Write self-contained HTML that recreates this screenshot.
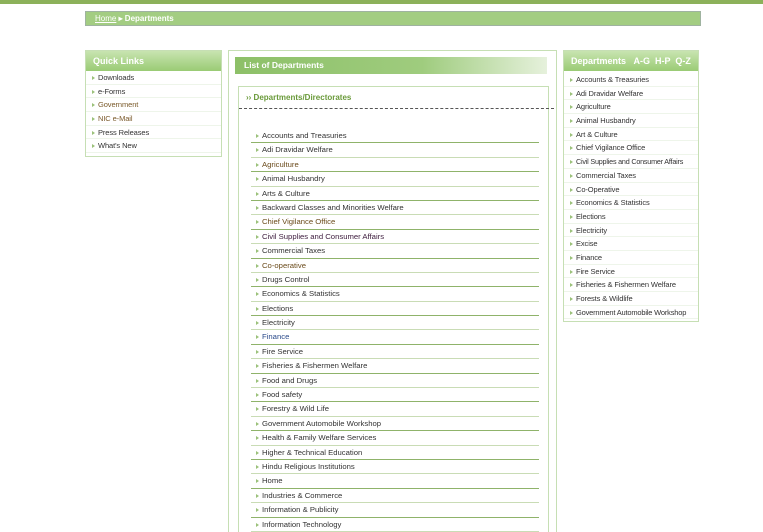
<!DOCTYPE html>
<html><head><meta charset="utf-8"><style>
*{margin:0;padding:0;box-sizing:border-box}
html,body{width:763px;height:532px;overflow:hidden}
body{background:#fff;font-family:"Liberation Sans",Arial,sans-serif;font-size:8px;color:#333;position:relative}
.top{position:absolute;left:0;top:0;width:763px;height:4px;background:#8cb15a}
.bc{position:absolute;left:85px;top:11px;width:616px;height:15px;background:#a3cd82;border:1px solid #9fb3a0;color:#fff;font-weight:bold;font-size:8px;line-height:13px;padding-left:9px}
.bc u{font-weight:normal}
.box{position:absolute;border:1px solid #c6dfb4;background:#fff}
.hd{height:20px;background:linear-gradient(#c8e4b0,#9acb74);color:#fff;font-weight:bold;font-size:9px;line-height:20px;padding-left:7px;white-space:nowrap}
ul{list-style:none}
.side li{height:13.7px;line-height:13.5px;border-bottom:1px solid #eef5ea;padding-left:12px;position:relative;font-size:7.5px;white-space:nowrap;letter-spacing:-0.1px}
.side li:before,.mid li:before{content:"";position:absolute;left:6px;top:5px;border-left:3px solid #9bc17a;border-top:2px solid transparent;border-bottom:2px solid transparent}
.mid li{height:14.4px;line-height:14px;border-bottom:1px solid #8fb36a;padding-left:11px;position:relative;font-size:7.7px}
.mid li.l{border-bottom-color:#c9dcb5}
.mid li:before{left:5px}
</style></head><body>
<div class="top"></div>
<div class="bc"><u>Home</u> ▸ Departments</div>
<div class="box" style="left:85px;top:50px;width:137px;height:107px">
<div class="hd">Quick Links</div>
<ul class="side">
<li>Downloads</li><li>e-Forms</li><li style="color:#7a5a2a">Government</li><li style="color:#7a5a2a">NIC e-Mail</li><li>Press Releases</li><li>What's New</li></ul></div>
<div class="box" style="left:228px;top:50px;width:329px;height:490px">
<div style="position:absolute;left:6px;top:6px;width:312px;height:17px;background:linear-gradient(90deg,#8dc068,#9fcc7e 60%,#e6f1dc);color:#fff;font-weight:bold;font-size:8.5px;line-height:17px;padding-left:9px">List of Departments</div>
<div style="position:absolute;left:9px;top:35px;width:311px;height:460px;border:1px solid #c6dfb4">
<div style="position:absolute;left:0;top:6px;padding-left:7px;color:#6a9a3a;font-weight:bold;font-size:8px">›› Departments/Directorates</div>
<div style="position:absolute;left:0;top:21px;width:315px;border-top:1px dashed #555"></div>
<ul class="mid" style="position:absolute;left:12px;top:42px;width:288px">
<li>Accounts and Treasuries</li><li class="l">Adi Dravidar Welfare</li><li style="color:#6a4a1a">Agriculture</li><li class="l">Animal Husbandry</li><li>Arts &amp; Culture</li><li class="l">Backward Classes and Minorities Welfare</li><li style="color:#6a4a1a">Chief Vigilance Office</li><li class="l" style="color:#402040">Civil Supplies and Consumer Affairs</li><li>Commercial Taxes</li><li class="l" style="color:#6a4a1a">Co-operative</li><li>Drugs Control</li><li class="l">Economics &amp; Statistics</li><li>Elections</li><li class="l">Electricity</li><li style="color:#2a4a8a">Finance</li><li class="l">Fire Service</li><li>Fisheries &amp; Fishermen Welfare</li><li class="l">Food and Drugs</li><li>Food safety</li><li class="l">Forestry &amp; Wild Life</li><li>Government Automobile Workshop</li><li class="l">Health &amp; Family Welfare Services</li><li>Higher &amp; Technical Education</li><li class="l">Hindu Religious Institutions</li><li>Home</li><li class="l">Industries &amp; Commerce</li><li>Information &amp; Publicity</li><li class="l">Information Technology</li></ul>
</div></div>
<div class="box" style="left:563px;top:50px;width:136px;height:272px;overflow:hidden">
<div class="hd">Departments &nbsp;&nbsp;A-G &nbsp;H-P &nbsp;Q-Z</div>
<ul class="side" style="padding-top:2px">
<li>Accounts &amp; Treasuries</li><li>Adi Dravidar Welfare</li><li>Agriculture</li><li>Animal Husbandry</li><li>Art &amp; Culture</li><li>Chief Vigilance Office</li><li style="font-size:7.2px;letter-spacing:-0.2px">Civil Supplies and Consumer Affairs</li><li>Commercial Taxes</li><li>Co-Operative</li><li>Economics &amp; Statistics</li><li>Elections</li><li>Electricity</li><li>Excise</li><li>Finance</li><li>Fire Service</li><li>Fisheries &amp; Fishermen Welfare</li><li>Forests &amp; Wildlife</li><li style="letter-spacing:-0.2px">Government Automobile Workshop</li></ul></div>
</body></html>
